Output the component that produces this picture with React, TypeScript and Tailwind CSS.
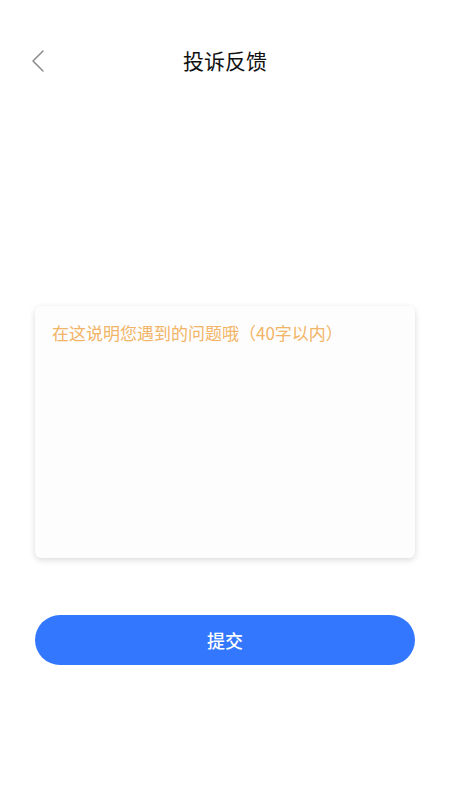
import React from "react";

export default function App() {
  return (
    <div
      className="w-[450px] h-[800px] bg-white flex flex-col"
      style={{ fontFamily: '"Noto Sans CJK SC", "Noto Sans", sans-serif' }}
    >
      <div className="relative h-[60px] mt-[30px] flex items-center justify-center">
        <svg
          className="absolute left-[29px] top-[19px]"
          width="18"
          height="24"
          viewBox="0 0 18 24"
          fill="none"
        >
          <path d="M14 2 L4 12 L14 22" stroke="#8a8a8a" strokeWidth="1.5" strokeLinecap="round" strokeLinejoin="round" />
        </svg>
        <span className="text-[21px] text-[#111] leading-none">投诉反馈</span>
      </div>
      <div className="mt-[216px] mx-[35px] h-[252px] rounded-[6px] bg-[#fdfdfd] shadow-[0_2px_6px_rgba(0,0,0,0.15)] px-[17px] pt-[15px]">
        <textarea
          className="w-full h-full resize-none outline-none bg-transparent text-[17px] leading-[24px] text-[#333] placeholder:text-[#f2b466]"
          placeholder="在这说明您遇到的问题哦（40字以内）"
        />
      </div>
      <button className="mt-[57px] mx-[35px] h-[50px] rounded-full bg-[#3377fe] text-white text-[18px] font-medium flex items-center justify-center">
        提交
      </button>
    </div>
  );
}
